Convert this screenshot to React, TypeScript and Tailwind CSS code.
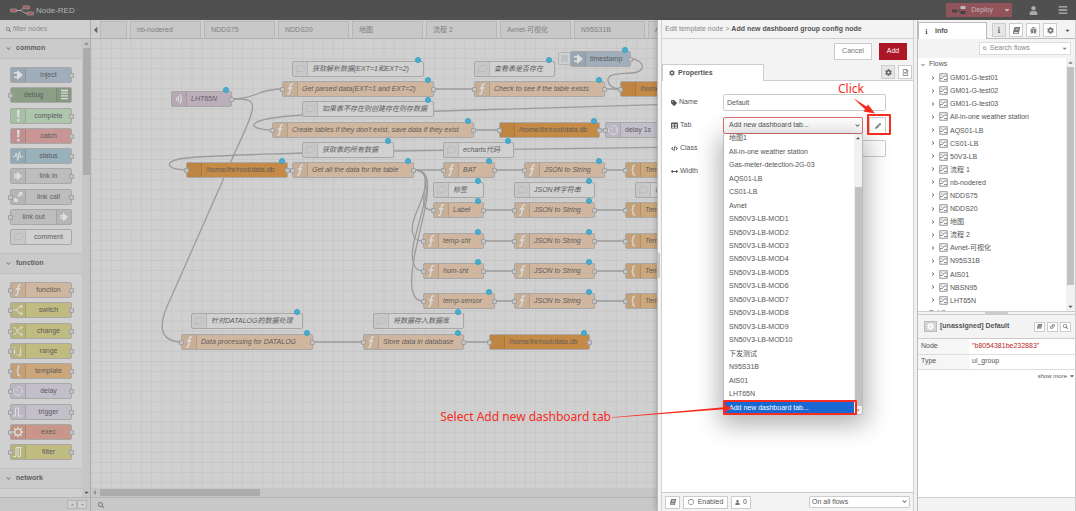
import type { ReactNode } from "react";
import clsx from "clsx";
import {
  FaArrowsAltH,
  FaBars,
  FaBook,
  FaBug,
  FaCaretDown,
  FaCaretLeft,
  FaCaretUp,
  FaChevronDown,
  FaChevronRight,
  FaCode,
  FaCog,
  FaInfo,
  FaLink,
  FaPencilAlt,
  FaRegCircle,
  FaRegFileAlt,
  FaSearch,
  FaTable,
  FaTag,
  FaUser,
} from "react-icons/fa";

type Kind =
  | "inject"
  | "debug"
  | "complete"
  | "catch"
  | "status"
  | "link"
  | "linkcall"
  | "comment"
  | "function"
  | "switch"
  | "change"
  | "range"
  | "template"
  | "delay"
  | "trigger"
  | "exec"
  | "filter"
  | "mqtt"
  | "db";

const fills: Record<Kind, string> = {
  inject: "bg-[#a0adba]",
  debug: "bg-[#8b9f86]",
  complete: "bg-[#aec6ae]",
  catch: "bg-[#c79695]",
  status: "bg-[#98b1bb]",
  link: "bg-[#bdbdbd]",
  linkcall: "bg-[#bdbdbd]",
  comment: "bg-[#d1d1d1]",
  function: "bg-[#d0b69e]",
  switch: "bg-[#c0bb80]",
  change: "bg-[#c0bb80]",
  range: "bg-[#c0bb80]",
  template: "bg-[#cba77b]",
  delay: "bg-[#c2beca]",
  trigger: "bg-[#c2beca]",
  exec: "bg-[#c9978a]",
  filter: "bg-[#c0bb80]",
  mqtt: "bg-[#bdafba]",
  db: "bg-[#c58a45]",
};

const glyphs: Record<Kind, ReactNode> = {
  inject: <path d="M2 3h3V1l6 5-6 5V9H2V7.5h3v-3H2z" fill="currentColor" stroke="none" />,
  debug: <path d="M3 1.500h7M3 4.200h7M3 6.900h7M3 9.600h7" strokeWidth="1.300" />,
  complete: <path d="M5 0h2.600l-.5 7.500H5.500zM5.200 9h2.200v2.400H5.200z" fill="currentColor" stroke="none" />,
  catch: <path d="M5 0h2.600l-.5 7.500H5.500zM5.200 9h2.200v2.400H5.200z" fill="currentColor" stroke="none" />,
  status: <path d="M1 6.500h2L4.300 3l1.500 7.500L7.300 1.500l1.200 6 .8-1H11" />,
  link: <path d="M2 4h3V1.500L10 6l-5 4.500V8H2V6.500h2.500v-1H2z" fill="currentColor" stroke="none" />,
  linkcall: <path d="M6.500 1h4v4L9 4 7 6 5.500 4.500l2-2zM1.500 7h3v1.500L6 8v3H2.500z" fill="currentColor" stroke="none" />,
  comment: <path d="M6.500 2.500c2.700 0 4.300 1.200 4.300 3s-1.600 3-4.300 3c-.7 0-1.300-.1-1.800-.2L2.300 9.700l.8-1.900C2.500 7.200 2.200 6.400 2.200 5.500c0-1.800 1.600-3 4.300-3z" strokeWidth=".8" />,
  function: <path d="M9 1.200C7 .3 6.500 1.500 6.300 3.500L5.700 9c-.2 2-1 2.500-2.500 1.800M4 5h4.200" strokeWidth="1.300" />,
  switch: <path d="M1 6h3c2 0 2-3.500 4-3.500h2M4 6c2 0 2 3.500 4 3.500h2M8.500 1l2 1.500-2 1.500M8.500 8l2 1.500-2 1.500" />,
  change: <path d="M1.500 2.500c4 0 4 7 8 7M1.500 9.500c4 0 4-7 8-7M8.500 1l2 1.500-2 1.500M8.500 8l2 1.500-2 1.500" />,
  range: <path d="M2.500 4.500V9M2.500 2v1M8.500 4v5c0 1.500-1 2-2 1.800M8.500 1.500v1M5 9v1" strokeWidth="1.200" />,
  template: <path d="M8 1C6.500 1 6 1.500 6 3v1.500C6 5.500 5.500 6 4.500 6 5.500 6 6 6.500 6 7.500V9c0 1.500.5 2 2 2" strokeWidth="1.200" />,
  delay: <path d="M6 1.500A4.500 4.500 0 1 1 2.200 3.600M6 6 3.500 3.500M6 1.500V3M10.500 6H9M6 10.500V9" strokeWidth=".8" />,
  trigger: <path d="M1 10h2.500V2h3v8H11" />,
  exec: <path d="M6 2.800a3.200 3.200 0 1 0 .01 0M6 .8v2M6 9.200v2M.8 6h2M9.200 6h2M2.300 2.300l1.400 1.400M8.300 8.300l1.400 1.400M2.300 9.700l1.400-1.400M8.300 3.700l1.400-1.400" strokeWidth="1.300" />,
  filter: <path d="M1.500 10.500h2.500V1.500h5.500M6 10.500h2.500v-9M6 10.500v-9" />,
  mqtt: <path d="M3.500 4.500v3M5 3c1 2 1 4 0 6M7 1.500c1.800 3 1.800 6 0 9" strokeWidth="1.200" />,
  db: null,
};

function Glyph({ kind }: { kind: Kind }) {
  return (
    <svg
      viewBox="0 0 12 12"
      className={clsx("size-3", kind === "comment" ? "text-[#b8b8b8]" : "text-[#dedede]")}
      fill="none"
      stroke="currentColor"
    >
      {glyphs[kind]}
    </svg>
  );
}

function Port({ side }: { side: "left" | "right" }) {
  return (
    <span
      className={clsx(
        "absolute top-[5px] size-[5px] rounded-[1px] border border-[#a0a0a0] bg-[#c4c4c4]",
        side === "left" ? "-left-[3px]" : "-right-[3px]",
      )}
    />
  );
}

type NodeProps = {
  kind: Kind;
  label: string;
  ports?: "in" | "out" | "both" | "none";
  iconRight?: boolean;
  italic?: boolean;
  changed?: boolean;
  onCanvas?: boolean;
};

function NodeBox({ kind, label, ports = "both", iconRight, italic, changed, onCanvas }: NodeProps) {
  return (
    <div
      className={clsx(
        "relative flex h-4 w-full rounded-[2px] border border-[#a8a8a8] text-[7px] leading-[14px] text-[#5c5c5c]",
        iconRight && "flex-row-reverse",
        fills[kind],
      )}
    >
      <span
        className={clsx(
          "flex w-[15px] shrink-0 items-center justify-center border-[#00000018] bg-[#0000000a]",
          iconRight ? "border-l" : "border-r",
        )}
      >
        <Glyph kind={kind} />
      </span>
      <span
        className={clsx(
          "min-w-0 grow whitespace-nowrap",
          onCanvas ? "pl-1" : "text-center",
          italic && "italic",
        )}
      >
        {label}
      </span>
      {(ports === "in" || ports === "both") && <Port side="left" />}
      {(ports === "out" || ports === "both") && <Port side="right" />}
      {changed && (
        <span className="absolute -top-[5px] right-[2px] size-[6px] rounded-full border border-[#3a9fc4] bg-[#4aaed0]" />
      )}
    </div>
  );
}

const commonNodes: NodeProps[] = [
  { kind: "inject", label: "inject", ports: "out" },
  { kind: "debug", label: "debug", ports: "in", iconRight: true },
  { kind: "complete", label: "complete", ports: "out" },
  { kind: "catch", label: "catch", ports: "out" },
  { kind: "status", label: "status", ports: "out" },
  { kind: "link", label: "link in", ports: "out" },
  { kind: "linkcall", label: "link call" },
  { kind: "link", label: "link out", ports: "in", iconRight: true },
  { kind: "comment", label: "comment", ports: "none" },
];

const functionNodes: NodeProps[] = [
  { kind: "function", label: "function" },
  { kind: "switch", label: "switch" },
  { kind: "change", label: "change" },
  { kind: "range", label: "range" },
  { kind: "template", label: "template" },
  { kind: "delay", label: "delay" },
  { kind: "trigger", label: "trigger" },
  { kind: "exec", label: "exec" },
  { kind: "filter", label: "filter" },
];

type FlowNode = NodeProps & { x: number; y: number; w: number };

const comment = (x: number, y: number, w: number, label: string): FlowNode => ({
  kind: "comment", x, y, w, label, ports: "none", italic: true, changed: true,
});
const func = (x: number, y: number, w: number, label: string): FlowNode => ({
  kind: "function", x, y, w, label, italic: true, changed: true,
});
const db = (x: number, y: number, w: number): FlowNode => ({
  kind: "db", x, y, w, label: "/home/lhr/root/data.db", changed: true,
});
const template = (y: number): FlowNode => ({
  kind: "template", x: 534, y, w: 61, label: "Template", italic: true, changed: true,
});

const flowNodes: FlowNode[] = [
  { kind: "mqtt", x: 80, y: 52, w: 61, label: "LHT65N", ports: "out", italic: true, changed: true },
  comment(201, 22, 132, "获取解析数据(EXT=1和EXT=2)"),
  func(191, 42, 152, "Get parsed data(EXT=1 and EXT=2)"),
  comment(211, 62, 132, "如果表不存在则创建存在则存数据"),
  func(181, 83, 202, "Create tables if they don't exist, save data if they exist"),
  comment(211, 103, 92, "获取表的所有数据"),
  db(95, 123, 102),
  func(201, 123, 122, "Get all the data for the table"),
  comment(383, 22, 81, "查看表是否存在"),
  func(383, 42, 131, "Check to see if the table exists"),
  { kind: "inject", x: 479, y: 12, w: 61, label: "timestamp", ports: "out", changed: true },
  db(529, 42, 102),
  db(408, 83, 101),
  { kind: "delay", x: 514, y: 83, w: 61, label: "delay 1s" },
  comment(352, 103, 71, "echarts代码"),
  func(352, 123, 52, "BAT"),
  func(433, 123, 81, "JSON to String"),
  template(123),
  comment(342, 143, 51, "标签"),
  comment(423, 143, 81, "JSON转字符串"),
  comment(544, 143, 71, "模板代码"),
  func(342, 163, 51, "Label"),
  func(423, 163, 81, "JSON to String"),
  template(163),
  func(332, 194, 61, "temp-sht"),
  func(423, 194, 81, "JSON to String"),
  template(194),
  func(332, 224, 61, "hum-sht"),
  func(423, 224, 81, "JSON to String"),
  template(224),
  func(332, 254, 72, "temp-sensor"),
  func(423, 254, 81, "JSON to String"),
  template(254),
  comment(100, 274, 112, "针对DATALOG的数据处理"),
  func(90, 295, 132, "Data processing for DATALOG"),
  comment(282, 274, 91, "将数据存入数据库"),
  func(272, 295, 101, "Store data in database"),
  db(398, 295, 101),
];

const wires = [
  "M141 60C166 60 166 50 191 50",
  "M141 60C156 60 164 60 161 72C158 86 150 98 132 141L75 270C70 283 66 302 90 303",
  "M343 50H383M514 50H529",
  "M540 20C552 20 558 33 540 34C530 35 516 34 517 42C518 47 523 50 529 50",
  "M590 65L212 76C150 80 155 90 181 91",
  "M383 91H408M509 91H514M197 131H201",
  "M590 108L302 112L212 114C150 116 100 117 88 120C74 123 74 130 95 131",
  "M323 131H352M404 131H433M514 131H534",
  "M323 131C336 131 335 140 333 155C332 166 333 171 342 171M393 171H423M504 171H534",
  "M323 131C344 131 333 155 326 172C318 190 320 202 332 202M393 202H423M504 202H534",
  "M323 131C346 131 334 160 325 195C319 215 320 232 332 232M393 232H423M504 232H534",
  "M323 131C348 131 332 175 326 205C318 240 318 262 332 262M404 262H423M504 262H534",
  "M222 303H272M373 303H398",
];

const flowTabs = ["nb-nodered", "NDDS75", "NDDS20", "地图", "流程 2", "Avnet-可视化", "N95S31B", "AIS01"];

const dashboardTabs = [
  "地图1",
  "All-in-one weather station",
  "Gas-meter-detection-2G-03",
  "AQS01-LB",
  "CS01-LB",
  "Avnet",
  "SN50V3-LB-MOD1",
  "SN50V3-LB-MOD2",
  "SN50V3-LB-MOD3",
  "SN50V3-LB-MOD4",
  "SN50V3-LB-MOD5",
  "SN50V3-LB-MOD6",
  "SN50V3-LB-MOD7",
  "SN50V3-LB-MOD8",
  "SN50V3-LB-MOD9",
  "SN50V3-LB-MOD10",
  "下发测试",
  "N95S31B",
  "AIS01",
  "LHT65N",
  "Add new dashboard tab...",
];

const flows = [
  "GM01-G-test01",
  "GM01-G-test02",
  "GM01-G-test03",
  "All-in-one weather station",
  "AQS01-LB",
  "CS01-LB",
  "50V3-LB",
  "流程 1",
  "nb-nodered",
  "NDDS75",
  "NDDS20",
  "地图",
  "流程 2",
  "Avnet-可视化",
  "N95S31B",
  "AIS01",
  "NBSN95",
  "LHT65N",
];

function Header() {
  return (
    <header className="flex h-5 shrink-0 items-center bg-[#505050] pr-2 pl-[10px]">
      <svg viewBox="0 0 24 11" className="h-[11px] w-6" fill="none">
        <path d="M6 5.500h3C13 5.500 12 2.500 16 2.500M9 5.500c4 0 4 3 9 3" stroke="#aaa" />
        <rect x=".5" y="4" width="6" height="3" rx=".5" fill="#a85a5e" stroke="#aaa" strokeWidth=".6" />
        <rect x="13" y="1" width="6.500" height="3" rx=".5" fill="#a85a5e" stroke="#aaa" strokeWidth=".6" />
        <rect x="17" y="7" width="6.500" height="3" rx=".5" fill="#a85a5e" stroke="#aaa" strokeWidth=".6" />
      </svg>
      <span className="ml-[2px] pt-[2px] text-[8px] leading-[10px] text-[#b4b4b4]">Node-RED</span>
      <div className="ml-auto flex h-[14px] bg-[#91545b] text-[#c4b4b6]">
        <button className="flex items-center gap-[5px] pr-2 pl-[6px] text-[7px]">
          <svg viewBox="0 0 14 10" className="h-[10px] w-[14px]" fill="none">
            <path d="M3 6h3l3-3h3M6 6l3 2" stroke="#555" />
            <rect x="0" y="4.500" width="5" height="3" fill="#444" />
            <rect x="8.500" y="1" width="5" height="3" fill="#bbb" />
            <rect x="8.500" y="6" width="5" height="3" fill="#444" />
          </svg>
          Deploy
        </button>
        <button aria-label="Deploy options" className="flex w-[11px] items-center justify-center">
          <FaCaretDown className="size-2" />
        </button>
      </div>
      <button aria-label="User" className="ml-[17px] text-[#aaa]">
        <FaUser className="size-[9px]" />
      </button>
      <button aria-label="Main menu" className="ml-5 text-[#b4b4b4]">
        <FaBars className="size-[10px]" />
      </button>
    </header>
  );
}

function PaletteCategory({ title, nodes }: { title: string; nodes: NodeProps[] }) {
  return (
    <section>
      <h2 className="flex h-5 items-center gap-[5px] border-b border-[#c0c0c0] bg-[#cacaca] pl-[6px] text-[7px] font-bold text-[#606060]">
        <FaChevronDown className="size-[5px] text-[#777]" />
        {title}
      </h2>
      {nodes.length > 0 && (
        <div className="flex h-[195px] flex-col justify-between border-b border-[#c0c0c0] px-[10px] py-2">
          {nodes.map((n) => (
            <div key={n.label} className="w-[62px]">
              <NodeBox {...n} />
            </div>
          ))}
        </div>
      )}
    </section>
  );
}

function Palette() {
  return (
    <aside className="flex w-[91px] shrink-0 flex-col border-r border-[#adadad] bg-[#d0d0d0]">
      <label className="flex h-[19px] shrink-0 items-center gap-[2px] border-b border-[#b0b0b0] pl-[6px] text-[#777]">
        <FaSearch className="size-[5px]" />
        <input
          aria-label="filter nodes"
          placeholder="filter nodes"
          className="w-16 text-[7px] outline-none placeholder:text-[#8c8c8c]"
        />
      </label>
      <div className="flex min-h-0 grow basis-0 overflow-hidden">
        <div className="grow">
          <PaletteCategory title="common" nodes={commonNodes} />
          <PaletteCategory title="function" nodes={functionNodes} />
          <PaletteCategory title="network" nodes={[]} />
        </div>
        <div className="flex w-[9px] flex-col items-center bg-[#c6c6c6] text-[#888]">
          <FaCaretUp className="my-px size-[7px]" />
          <div className="h-[127px] w-[7px] bg-[#acacac]" />
          <FaCaretDown className="mt-auto mb-px size-[7px] text-[#555]" />
        </div>
      </div>
      <div className="flex h-[14px] shrink-0 items-center justify-end border-t border-[#b4b4b4] bg-[#c8c8c8] pr-[3px] text-[#999]">
        <button aria-label="Collapse all" className="flex h-[9px] w-[10px] items-center justify-center border border-[#b4b4b4] bg-[#d0d0d0]">
          <FaCaretUp className="size-[5px]" />
        </button>
        <button aria-label="Expand all" className="flex h-[9px] w-[10px] items-center justify-center border border-[#b4b4b4] bg-[#d0d0d0]">
          <FaCaretDown className="size-[5px]" />
        </button>
      </div>
    </aside>
  );
}

function Workspace() {
  return (
    <main className="flex min-w-0 grow basis-0 flex-col overflow-hidden">
      <nav className="flex h-[19px] shrink-0 items-end gap-[3px] border-b border-[#b0b0b0] bg-[#cecece] text-[7px] text-[#808080]">
        <div className="flex h-[17px]">
          <button aria-label="Scroll tabs left" className="flex w-[10px] items-center justify-center border-r border-[#b8b8b8] text-[#666]">
            <FaCaretLeft className="size-[10px]" />
          </button>
          <span className="w-[26px] border-t border-r border-[#b8b8b8] bg-[#c8c8c8]" />
        </div>
        {flowTabs.map((t) => (
          <a
            key={t}
            href="#flow"
            className="h-[17px] w-[71px] shrink-0 border border-b-0 border-[#b8b8b8] bg-[#c8c8c8] pl-[6px] leading-[15px]"
          >
            {t}
          </a>
        ))}
      </nav>
      <div className="relative grow basis-0 overflow-hidden bg-[#d0d0d0]">
        <svg className="absolute inset-0 size-full" fill="none">
          <defs>
            <pattern id="grid" width="10.1" height="10.1" patternUnits="userSpaceOnUse" x="-.4" y="-1.200">
              <path d="M0 .5H10.100M.5 0V10.100" stroke="#c7c7c7" />
            </pattern>
          </defs>
          <rect width="100%" height="100%" fill="url(#grid)" />
          <g stroke="#9c9c9c" strokeWidth="1.300">
            {wires.map((d) => (
              <path key={d} d={d} />
            ))}
          </g>
        </svg>
        <span className="absolute top-[13px] left-[467px] size-[13px] rounded-[2px] border border-[#b4b4b4] bg-[#d0d0d0] p-[2px]">
          <span className="block size-full rounded-[1px] bg-[#bcc2c8]" />
        </span>
        {flowNodes.map((n) => (
          <div key={`${n.x}-${n.y}`} className="absolute" style={{ left: n.x, top: n.y, width: n.w }}>
            <NodeBox {...n} onCanvas />
          </div>
        ))}
      </div>
      <div className="flex h-[9px] shrink-0 items-center bg-[#c6c6c6] text-[#888]">
        <FaCaretLeft className="mr-[2px] size-[7px]" />
        <div className="h-[7px] w-40 bg-[#acacac]" />
      </div>
      <div className="flex h-[14px] shrink-0 items-center border-t border-[#b4b4b4] bg-[#c8c8c8] pl-[7px] text-[#777]">
        <button aria-label="Search flows">
          <FaSearch className="size-[6px]" />
        </button>
      </div>
    </main>
  );
}

function FieldLabel({ htmlFor, icon, children }: { htmlFor: string; icon: ReactNode; children: string }) {
  return (
    <label htmlFor={htmlFor} className="flex w-[52px] shrink-0 items-center gap-[2px] whitespace-nowrap">
      {icon}
      {children}
    </label>
  );
}

function TabListbox() {
  return (
    <div className="absolute top-[17px] left-0 z-10 flex h-[281px] w-full overflow-hidden rounded-b-[3px] border border-t-0 border-[#bbb] bg-white shadow-[0_6px_24px_4px_rgba(0,0,0,0.3)]">
      <ul role="listbox" aria-label="Dashboard tabs" className="flex h-[283px] grow flex-col self-end text-[7px] text-[#555]">
        {dashboardTabs.map((t, i) => (
          <li
            key={t}
            role="option"
            aria-selected={i === dashboardTabs.length - 1}
            className="flex flex-1 items-center px-[5px] leading-[9px] whitespace-nowrap aria-selected:bg-[#1967d2] aria-selected:text-white"
          >
            {t}
          </li>
        ))}
      </ul>
      <div className="flex w-2 flex-col items-center bg-[#f1f1f1] text-[#555]">
        <FaCaretUp className="my-px size-[6px]" />
        <div className="mt-[45px] w-[7px] grow bg-[#c1c1c1]" />
        <FaCaretDown className="my-px size-[6px] text-[#999]" />
      </div>
    </div>
  );
}

function EditTray() {
  return (
    <section className="relative flex w-[258px] shrink-0 flex-col border-l border-[#bbb] bg-[#f3f3f3] pr-px pl-[3px] shadow-[-2px_0_4px_rgba(0,0,0,0.15)]">
      <span className="absolute top-[233px] left-0 h-[25px] w-[2px] bg-[#c8c8c8]" />
      <div className="flex grow flex-col border-x border-[#d0d0d0] bg-white text-[7px] text-[#555]">
        <h1 className="h-[19px] border-b border-[#d0d0d0] bg-[#f3f3f3] pl-[3px] leading-[18px] whitespace-nowrap text-[#888]">
          Edit template node &gt; <b className="text-[#555]">Add new dashboard group config node</b>
        </h1>
        <div className="flex h-6 items-center justify-end gap-[7px] bg-[#f3f3f3] pr-[6px]">
          <button className="h-[17px] w-[38px] border border-[#ccc] bg-white text-[#777]">Cancel</button>
          <button className="h-[17px] w-7 bg-[#ad1625] text-white">Add</button>
        </div>
        <div className="flex h-[18px] items-end border-b border-[#ccc] bg-[#f3f3f3] pr-px">
          <a
            href="#properties"
            className="-mb-px flex h-[17px] w-[102px] items-center gap-[3px] border border-b-0 border-[#ccc] bg-white pl-[6px] font-bold"
          >
            <FaCog className="size-[6px] text-[#666]" />
            Properties
          </a>
          <button aria-label="Properties" className="mb-px ml-auto flex size-[14px] items-center justify-center border border-[#ccc] bg-[#e6e6e6] text-[#666]">
            <FaCog className="size-[7px]" />
          </button>
          <button aria-label="Description" className="mb-px ml-[3px] flex size-[14px] items-center justify-center border border-[#ccc] bg-white text-[#777]">
            <FaRegFileAlt className="size-[7px]" />
          </button>
        </div>

        <form className="flex grow flex-col gap-[6px] pt-[13px] pr-[27px] pl-[9px]">
          <div className="flex h-[17px] items-center">
            <FieldLabel htmlFor="name" icon={<FaTag className="size-[6px]" />}>Name</FieldLabel>
            <input id="name" defaultValue="Default" className="h-full min-w-0 grow rounded-[2px] border border-[#ccc] px-[3px]" />
          </div>
          <div className="flex h-[17px] items-center">
            <FieldLabel htmlFor="tab" icon={<FaTable className="size-[7px]" />}>Tab</FieldLabel>
            <div className="relative h-full min-w-0 grow">
              <select id="tab" className="size-full appearance-none rounded-[2px] border border-[#d6706f] bg-white px-[5px]">
                <option>Add new dashboard tab...</option>
              </select>
              <FaChevronDown className="pointer-events-none absolute top-[6px] right-[3px] size-[5px]" />
              <TabListbox />
            </div>
            <button type="button" aria-label="Edit tab" className="ml-[6px] flex h-full w-[17px] items-center justify-center border border-[#ccc] text-[#777]">
              <FaPencilAlt className="size-[6px]" />
            </button>
          </div>
          <div className="flex h-[17px] items-center">
            <FieldLabel htmlFor="class" icon={<FaCode className="size-[7px]" />}>Class</FieldLabel>
            <input id="class" className="h-full min-w-0 grow rounded-[2px] border border-[#ccc]" />
          </div>
          <div className="flex h-[17px] items-center">
            <FieldLabel htmlFor="width" icon={<FaArrowsAltH className="size-[7px]" />}>Width</FieldLabel>
            <button id="width" type="button" className="h-full w-8 rounded-[2px] border border-[#ccc]" />
          </div>
        </form>

        <div className="flex h-[19px] items-center gap-[3px] border-t border-[#ccc] bg-[#f3f3f3] px-[3px]">
          <button aria-label="Help" className="flex h-[13px] w-[15px] items-center justify-center border border-[#ccc] bg-white text-[#777]">
            <FaBook className="size-[6px] -skew-x-12" />
          </button>
          <button className="flex h-[13px] w-[45px] items-center justify-center gap-1 border border-[#ccc] bg-white">
            <FaRegCircle className="size-[6px] text-[#777]" />
            Enabled
          </button>
          <button className="flex h-[13px] w-5 items-center justify-center gap-[3px] border border-[#ccc] bg-white">
            <FaUser className="size-[5px] text-[#777]" />0
          </button>
          <div className="relative ml-auto h-3 w-[101px]">
            <select aria-label="Scope" className="size-full appearance-none rounded-[2px] border border-[#ccc] bg-white px-[2px]">
              <option>On all flows</option>
            </select>
            <FaChevronDown className="pointer-events-none absolute top-[3px] right-[3px] size-[5px]" />
          </div>
        </div>
      </div>

      {/* Walkthrough annotations */}
      <span className="absolute top-[62px] left-[180px] z-20 font-['Noto_Sans','Open_Sans',sans-serif] text-[12px] leading-[14px] text-[#f62c1e]">
        Click
      </span>
      <span className="absolute top-[389px] right-[304px] z-20 font-['Noto_Sans','Open_Sans',sans-serif] text-[12px] leading-4 whitespace-nowrap text-[#f62c1e]">
        Select Add new dashboard tab
      </span>
      <span className="absolute top-[94px] left-[209px] z-20 h-[21px] w-6 rounded-[1px] border-2 border-[#f62c1e]" />
      <span className="absolute top-[380px] left-[65px] z-20 h-[15px] w-[134px] rounded-[1px] border-2 border-[#f62c1e]" />
      <svg viewBox="0 0 30 20" className="absolute top-[76px] left-[190px] z-20 h-5 w-[30px]" fill="#f62c1e">
        <path d="M5 2L18.500 10.500L20 8.500L27 17.500L15.500 15.500L17 13.200z" />
      </svg>
      <svg viewBox="0 0 124 14" className="absolute top-[384px] -left-[46px] z-20 h-[14px] w-[124px]" fill="#f62c1e">
        <path d="M0 13.300L112 3.200L112 .5L120 4L112 8.500L112 5.200L0 13.800z" />
      </svg>
    </section>
  );
}

function FlowIcon() {
  return (
    <svg viewBox="0 0 9 9" className="size-[9px] shrink-0" fill="none" stroke="#777" strokeWidth=".8">
      <rect x=".8" y=".8" width="7.400" height="7.400" />
      <path d="M1 5.500h2.500L5 3h3M5 6.500h3M2 3h1.500" />
    </svg>
  );
}

function Sidebar() {
  const tools = [
    { label: "Info", icon: <FaInfo className="size-[6px]" />, on: true },
    { label: "Help", icon: <FaBook className="size-[7px] -skew-x-12" /> },
    { label: "Debug", icon: <FaBug className="size-[7px]" /> },
    { label: "Configuration", icon: <FaCog className="size-[7px]" /> },
  ];
  return (
    <aside className="flex w-[161px] shrink-0 flex-col border-r border-[#ccc] bg-[#f3f3f3] pl-[2px] text-[7px] text-[#555]">
      <div className="flex grow flex-col border-l border-[#bbb] bg-white">
        <div className="flex h-[19px] items-end border-b border-[#bbb] bg-[#f3f3f3]">
          <a href="#info" className="-mb-px flex h-[17px] w-[69px] items-center gap-[6px] border border-b-0 border-[#bbb] bg-white pl-[5px] font-bold">
            <FaInfo className="size-[5px]" />
            info
          </a>
          <div className="mb-px ml-[5px] flex gap-[3px] text-[#777]">
            {tools.map((t) => (
              <button
                key={t.label}
                aria-label={t.label}
                className={clsx("flex size-[14px] items-center justify-center border border-[#ccc]", t.on ? "bg-[#e6e6e6]" : "bg-white")}
              >
                {t.icon}
              </button>
            ))}
          </div>
          <button aria-label="More tabs" className="mb-1 ml-[7px]">
            <FaCaretDown className="size-[7px]" />
          </button>
        </div>
        <div className="flex h-[19px] items-center justify-end bg-[#f3f3f3] pr-1">
          <label className="flex h-[13px] w-[92px] items-center gap-[3px] border border-[#ddd] bg-white px-[3px] text-[#888]">
            <FaSearch className="size-[5px]" />
            <input aria-label="Search flows" placeholder="Search flows" className="min-w-0 grow outline-none placeholder:text-[#888]" />
            <FaCaretDown className="size-[7px]" />
          </label>
        </div>
        <div className="flex h-[253px] shrink-0 overflow-hidden">
          <ul className="flex h-[262px] grow flex-col whitespace-nowrap">
            <li className="flex flex-1 items-center gap-1 pl-[3px]">
              <FaChevronDown className="size-1" />
              Flows
            </li>
            {flows.map((f) => (
              <li key={f} className="flex flex-1 items-center gap-[2px] pl-[13px] leading-[9px]">
                <FaChevronRight className="mr-[2px] size-1" />
                <FlowIcon />
                {f}
              </li>
            ))}
            <li className="flex flex-1 items-center gap-1 pl-[3px]">
              <FaChevronRight className="size-1" />
              Subflows
            </li>
          </ul>
          <div className="flex w-[9px] flex-col items-center bg-[#f1f1f1] text-[#555]">
            <FaCaretUp className="my-px size-[7px] text-[#888]" />
            <div className="w-[7px] grow bg-[#c1c1c1]" />
            <FaCaretDown className="mt-[18px] mb-px size-[7px]" />
          </div>
        </div>
        <div className="flex h-1 items-center justify-center border-y border-[#ccc] bg-[#f3f3f3]">
          <span className="h-[2px] w-[23px] bg-[#ccc]" />
        </div>
        <div className="flex h-6 items-center gap-[3px] border-b border-[#ccc] bg-[#f3f3f3] pr-1 pl-[6px]">
          <span className="flex h-[11px] w-[13px] items-center justify-center border border-[#bbb] bg-[#d4d4d4] text-white">
            <FaCog className="size-[7px]" />
          </span>
          <b>[unassigned] Default</b>
          <div className="ml-auto flex gap-[2px] text-[#777]">
            <button aria-label="Open help" className="flex h-[10px] w-[11px] items-center justify-center border border-[#ccc] bg-white">
              <FaBook className="size-[5px] -skew-x-12" />
            </button>
            <button aria-label="Copy link" className="flex h-[10px] w-[11px] items-center justify-center border border-[#ccc] bg-white">
              <FaLink className="size-[5px]" />
            </button>
            <button aria-label="Find node" className="flex h-[10px] w-[11px] items-center justify-center border border-[#ccc] bg-white">
              <FaSearch className="size-[5px]" />
            </button>
          </div>
        </div>
        <table className="w-full text-left">
          <tbody>
            <tr className="h-[15px] border-b border-[#ddd]">
              <th className="w-[51px] bg-[#f6f6f6] pl-[3px] font-normal">Node</th>
              <td className="pl-[3px] text-[#b72828]">"b8054381be232883"</td>
            </tr>
            <tr className="h-[15px] border-b border-[#ddd]">
              <th className="bg-[#f6f6f6] pl-[3px] font-normal">Type</th>
              <td className="pl-[3px]">ui_group</td>
            </tr>
          </tbody>
        </table>
        <button className="mt-[2px] flex items-center gap-[2px] self-end text-[6px] leading-[9px]">
          show more
          <FaCaretDown className="size-[6px]" />
        </button>
        <div className="mt-auto h-[14px] border-t border-[#ccc] bg-[#f3f3f3]" />
      </div>
    </aside>
  );
}

export default function App() {
  return (
    <div className="flex h-screen flex-col overflow-hidden bg-[#f3f3f3] font-['Liberation_Sans','Noto_Sans_CJK_SC',sans-serif]">
      <Header />
      <div className="flex min-h-0 grow">
        <Palette />
        <Workspace />
        <EditTray />
        <Sidebar />
      </div>
    </div>
  );
}
